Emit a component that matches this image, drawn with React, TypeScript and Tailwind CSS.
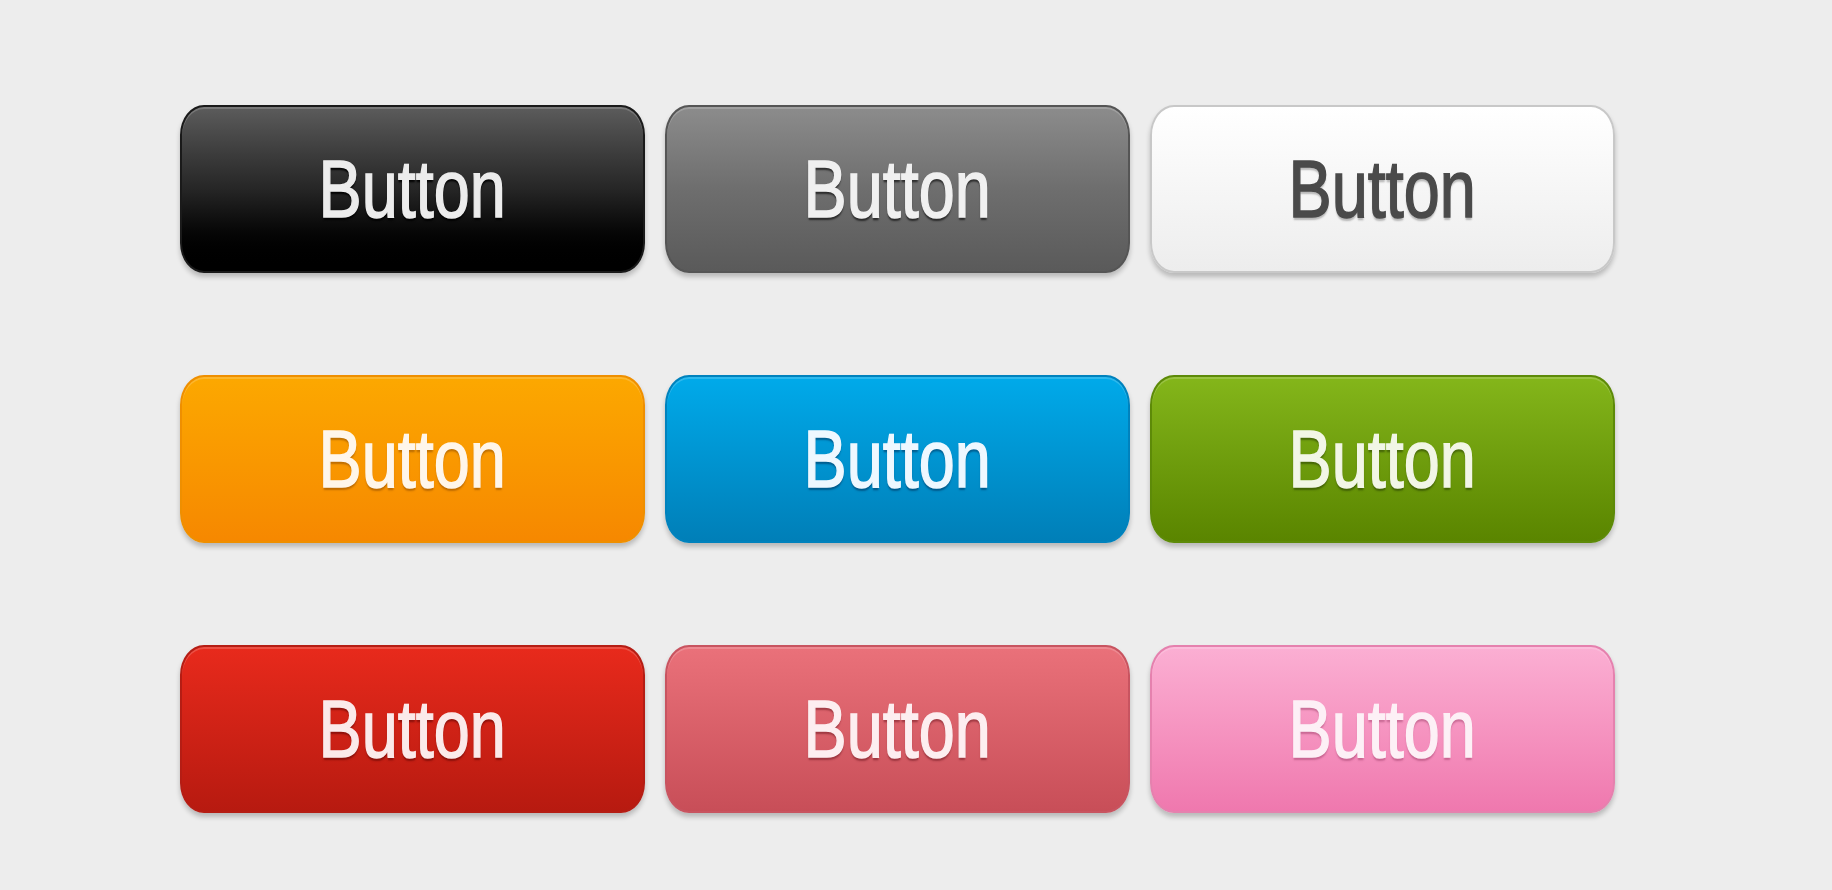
import React from "react";

type Variant = {
  key: string;
  className: string;
  text: string;
};

// Nine glossy buttons, three rows of three.
const variants: Variant[] = [
  {
    key: "black",
    className: "bg-gradient-to-b from-[#5c5c5c] via-[#262626] to-[#000000] border-[#1a1a1a]",
    text: "text-[#ececec] [text-shadow:0_3px_2px_rgba(0,0,0,0.9)]",
  },
  {
    key: "gray",
    className: "bg-gradient-to-b from-[#8c8c8c] via-[#6e6e6e] to-[#5a5a5a] border-[#555555]",
    text: "text-[#f0f0f0] [text-shadow:0_3px_2px_rgba(0,0,0,0.6)]",
  },
  {
    key: "white",
    className: "bg-gradient-to-b from-[#ffffff] to-[#ededed] border-[#c8c8c8]",
    text: "text-[#4a4a4a] [text-shadow:0_3px_2px_rgba(0,0,0,0.25)]",
  },
  {
    key: "orange",
    className: "bg-gradient-to-b from-[#fca800] to-[#f68800] border-[#ef8f00]",
    text: "text-[#fff6ea] [text-shadow:0_3px_2px_rgba(120,60,0,0.45)]",
  },
  {
    key: "blue",
    className: "bg-gradient-to-b from-[#00aaea] to-[#007fb8] border-[#0082bd]",
    text: "text-[#eef8ff] [text-shadow:0_3px_2px_rgba(0,40,80,0.5)]",
  },
  {
    key: "green",
    className: "bg-gradient-to-b from-[#84b61a] to-[#5a8500] border-[#5d8a08]",
    text: "text-[#f2f6e6] [text-shadow:0_3px_2px_rgba(30,50,0,0.5)]",
  },
  {
    key: "red",
    className: "bg-gradient-to-b from-[#e82a1c] to-[#b71a10] border-[#b51d14]",
    text: "text-[#fbeaea] [text-shadow:0_3px_2px_rgba(80,0,0,0.5)]",
  },
  {
    key: "rose",
    className: "bg-gradient-to-b from-[#ea717a] to-[#c84e58] border-[#c85460]",
    text: "text-[#fdeef0] [text-shadow:0_3px_2px_rgba(90,10,20,0.45)]",
  },
  {
    key: "pink",
    className: "bg-gradient-to-b from-[#fbafd3] to-[#ef78ae] border-[#e581ae]",
    text: "text-[#fdf0f6] [text-shadow:0_3px_2px_rgba(120,30,70,0.35)]",
  },
];

function GlossyButton({ v }: { v: Variant }) {
  return (
    <button
      type="button"
      className={`flex h-[168px] w-[465px] items-center justify-center rounded-[24px_/_30px] border-2 shadow-[0_4px_5px_rgba(0,0,0,0.22),inset_0_2px_0_rgba(255,255,255,0.18)] ${v.className}`}
    >
      <span
        className={`inline-block scale-x-[0.8] text-[81px] leading-none [-webkit-text-stroke:1.5px_currentColor] ${v.text}`}
        style={{ fontFamily: '"Liberation Sans", Arial, sans-serif' }}
      >
        Button
      </span>
    </button>
  );
}

export default function App() {
  return (
    <div className="h-[890px] w-[1832px] overflow-hidden bg-[#ededed]">
      <div className="grid grid-cols-[465px_465px_465px] gap-x-[20px] gap-y-[102px] pl-[180px] pt-[105px]">
        {variants.map((v) => (
          <GlossyButton key={v.key} v={v} />
        ))}
      </div>
    </div>
  );
}
